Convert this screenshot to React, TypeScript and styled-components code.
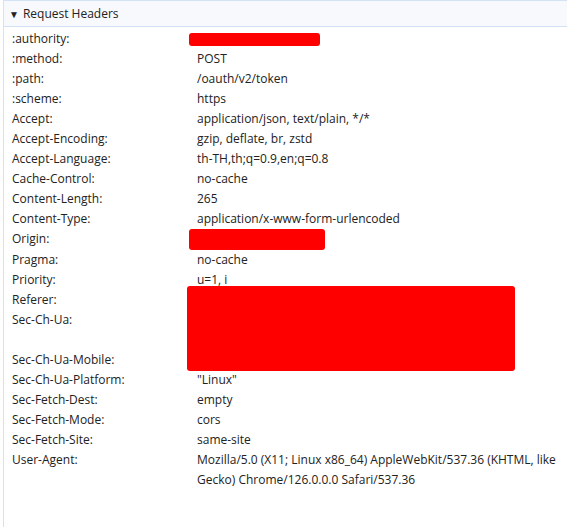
import { Fragment } from 'react';
import styled, { createGlobalStyle } from 'styled-components';

const GlobalStyle = createGlobalStyle`
  html, body {
    margin: 0;
    padding: 0;
    background: #ffffff;
  }
  body {
    font-family: "Open Sans", "Noto Sans", sans-serif;
    color: #222222;
  }
`;

const Panel = styled.section`
  margin-left: 3px;
  min-height: 527px;
  border-left: 1px solid #d4e2f6;
  box-sizing: border-box;
`;

const SectionHeader = styled.div`
  display: flex;
  align-items: center;
  gap: 4px;
  height: 25px;
  padding-left: 5px;
  background: #f7f9fd;
  border-top: 1px solid #d4e2f6;
  border-bottom: 1px solid #d4e2f6;
  font-size: 12px;
  color: #222;
`;

const Caret = styled.span`
  font-size: 10px;
  line-height: 1;
`;

const HeaderList = styled.dl`
  position: relative;
  display: grid;
  grid-template-columns: 185px 1fr;
  margin: 0;
  padding: 2px 8px 0 8px;
  font-size: 12px;
  line-height: 20px;
`;

const Name = styled.dt`
  margin: 0;
`;

const Value = styled.dd<{ $lines?: number }>`
  margin: 0;
  min-height: ${p => (p.$lines ?? 1) * 20}px;
`;

const Redaction = styled.span<{ $w: number; $h: number }>`
  display: inline-block;
  vertical-align: middle;
  width: ${p => p.$w}px;
  height: ${p => p.$h}px;
  background: #ff0000;
  border-radius: 3px;
  margin-left: -8px;
`;

const RedactionBlock = styled.div`
  position: absolute;
  left: 183px;
  top: 259px;
  width: 328px;
  height: 85px;
  background: #ff0000;
  border-radius: 3px;
`;

type Row = { name: string; value?: string; redact?: [number, number]; lines?: number };

const ROWS: Row[] = [
  { name: ':authority:', redact: [131, 13] },
  { name: ':method:', value: 'POST' },
  { name: ':path:', value: '/oauth/v2/token' },
  { name: ':scheme:', value: 'https' },
  { name: 'Accept:', value: 'application/json, text/plain, */*' },
  { name: 'Accept-Encoding:', value: 'gzip, deflate, br, zstd' },
  { name: 'Accept-Language:', value: 'th-TH,th;q=0.9,en;q=0.8' },
  { name: 'Cache-Control:', value: 'no-cache' },
  { name: 'Content-Length:', value: '265' },
  { name: 'Content-Type:', value: 'application/x-www-form-urlencoded' },
  { name: 'Origin:', redact: [136, 21] },
  { name: 'Pragma:', value: 'no-cache' },
  { name: 'Priority:', value: 'u=1, i' },
  { name: 'Referer:', value: '' },
  { name: 'Sec-Ch-Ua:', value: '', lines: 2 },
  { name: 'Sec-Ch-Ua-Mobile:', value: '' },
  { name: 'Sec-Ch-Ua-Platform:', value: '"Linux"' },
  { name: 'Sec-Fetch-Dest:', value: 'empty' },
  { name: 'Sec-Fetch-Mode:', value: 'cors' },
  { name: 'Sec-Fetch-Site:', value: 'same-site' },
  {
    name: 'User-Agent:',
    value: 'Mozilla/5.0 (X11; Linux x86_64) AppleWebKit/537.36 (KHTML, like Gecko) Chrome/126.0.0.0 Safari/537.36',
  },
];

export default function App() {
  return (
    <>
      <GlobalStyle />
      <Panel>
        <SectionHeader>
          <Caret>▼</Caret>
          <span>Request Headers</span>
        </SectionHeader>
        <HeaderList>
          {ROWS.map(row => (
            <Fragment key={row.name}>
              <Name>{row.name}</Name>
              <Value $lines={row.lines}>
                {row.redact ? <Redaction $w={row.redact[0]} $h={row.redact[1]} /> : row.value}
              </Value>
            </Fragment>
          ))}
          <RedactionBlock />
        </HeaderList>
      </Panel>
    </>
  );
}
